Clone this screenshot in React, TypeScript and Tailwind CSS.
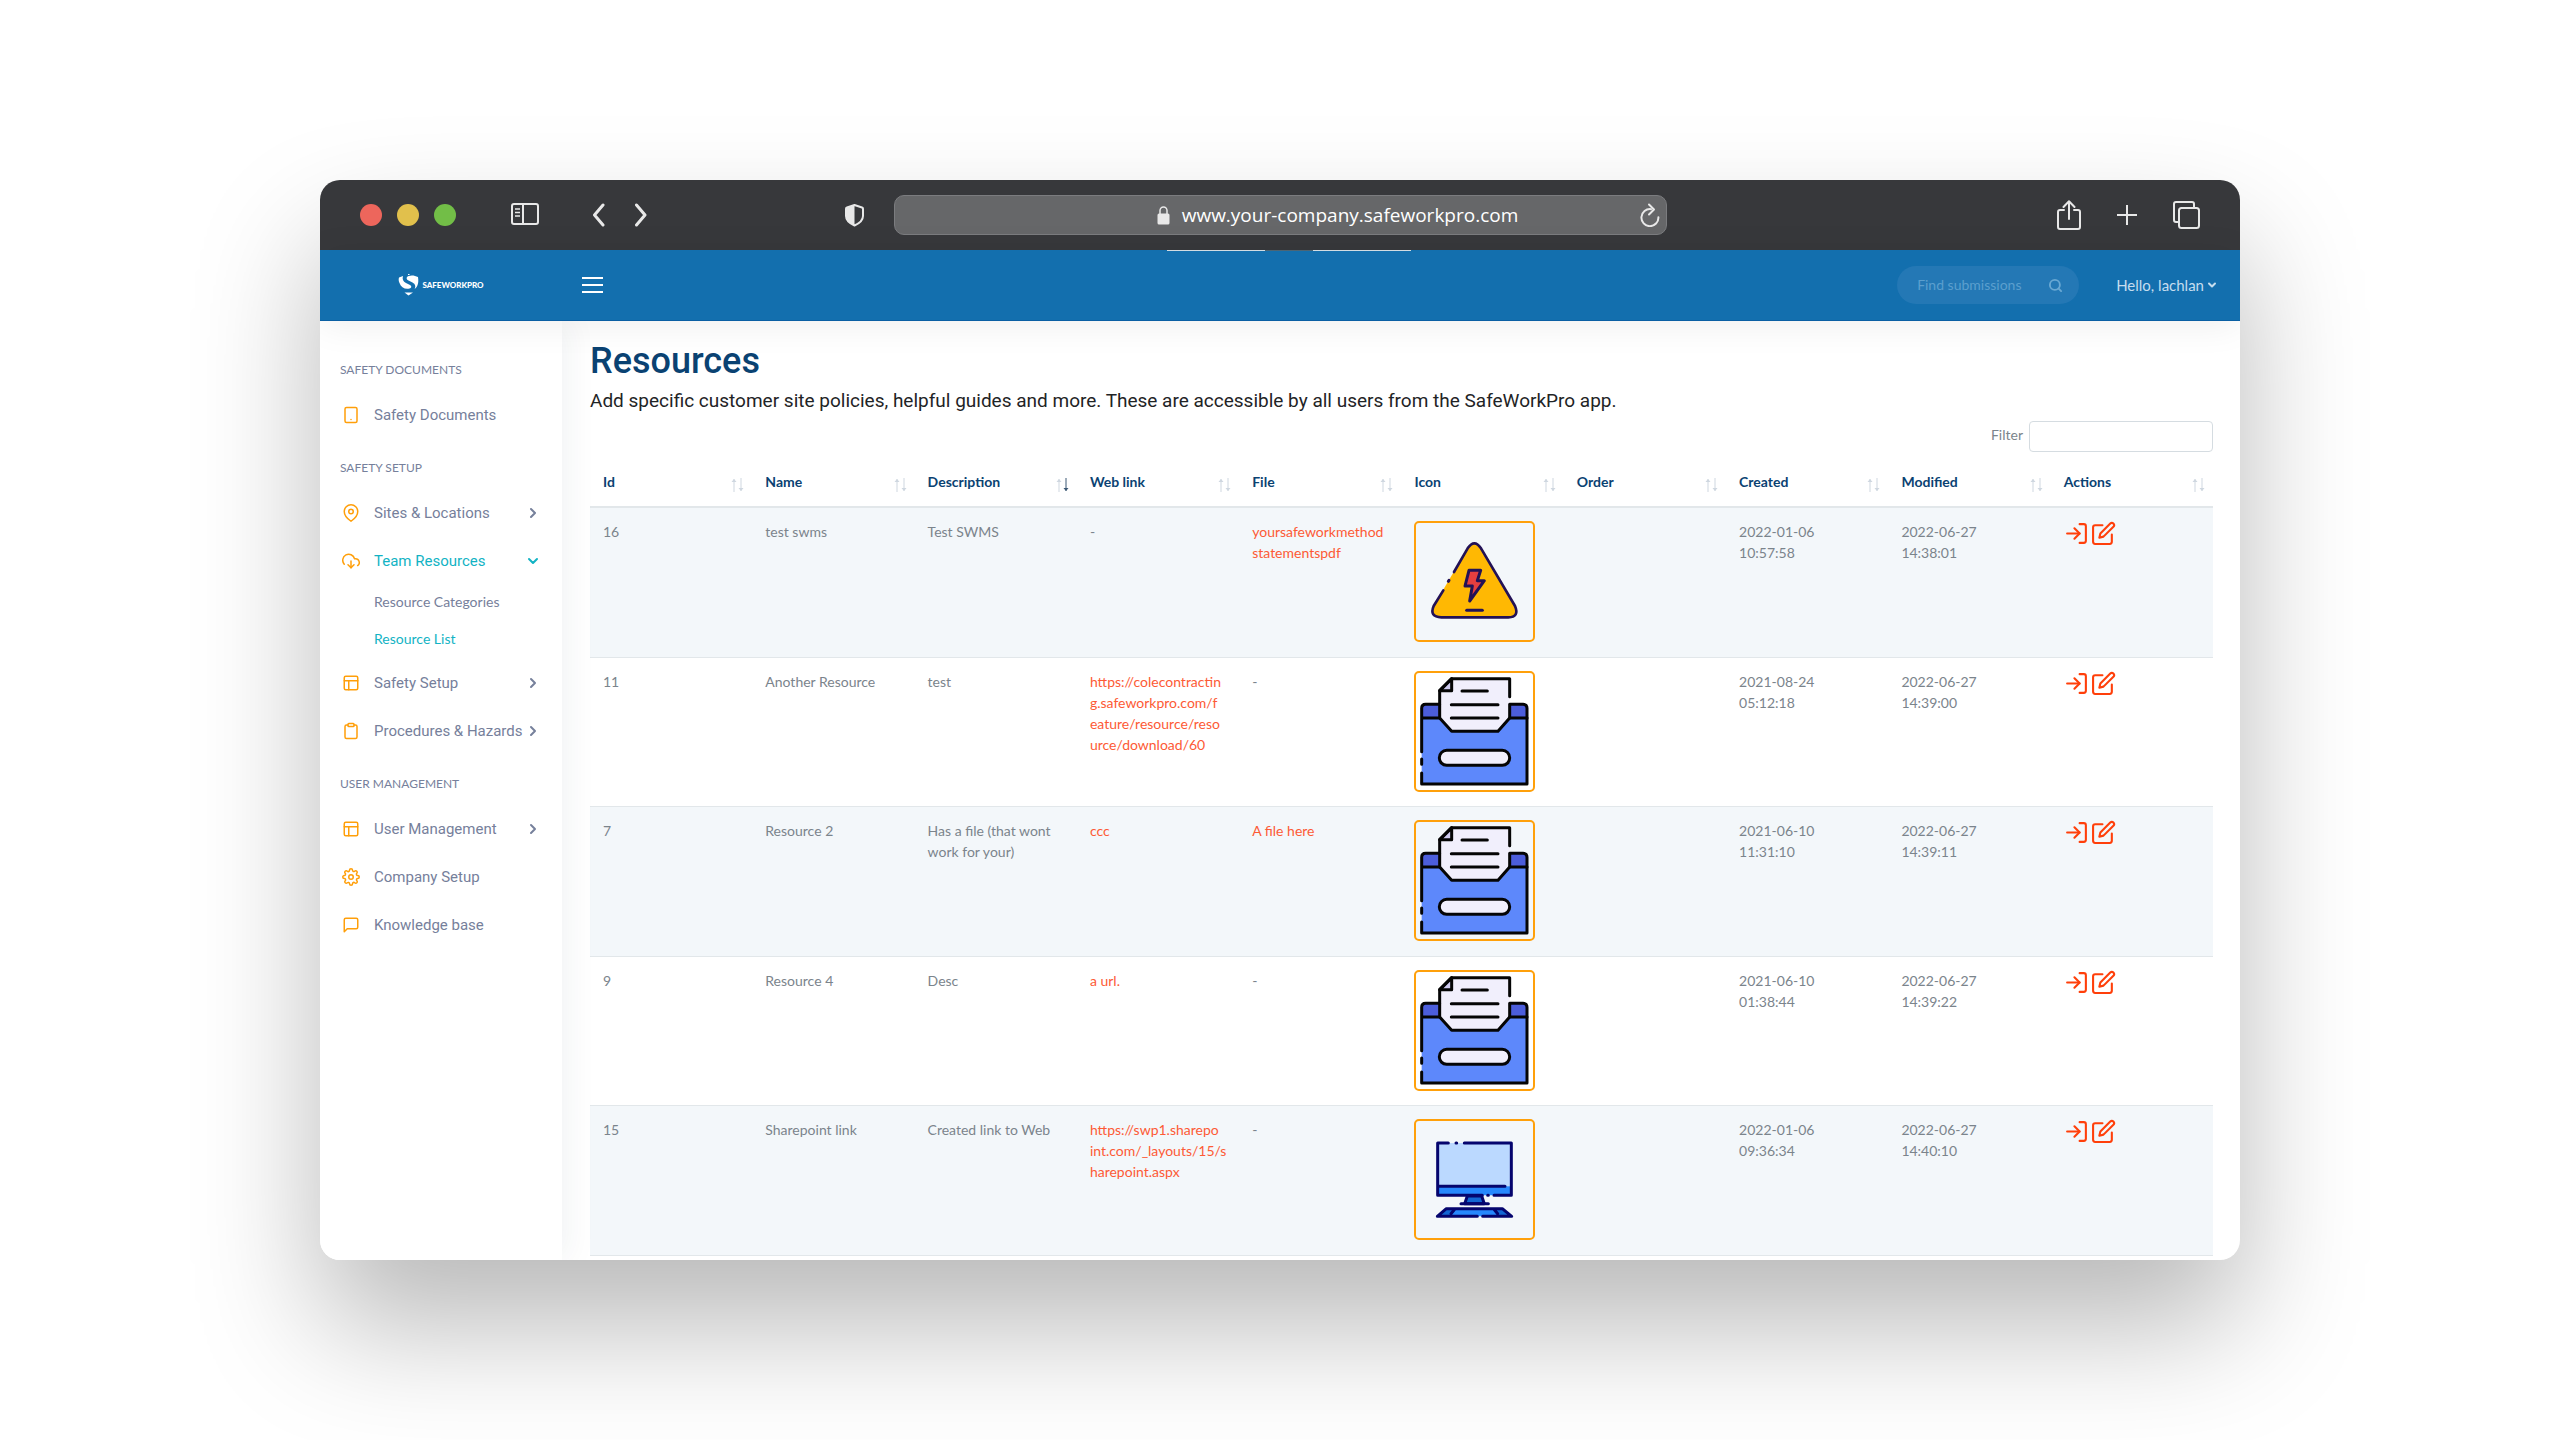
import React, { Fragment } from "react";
import type { ReactNode } from "react";
import type { IconType } from "react-icons";
import {
  FiChevronDown,
  FiChevronRight,
  FiClipboard,
  FiDownloadCloud,
  FiEdit,
  FiLayout,
  FiLogIn,
  FiMapPin,
  FiMessageSquare,
  FiSearch,
  FiSettings,
  FiTablet,
} from "react-icons/fi";

/* ---------- Browser chrome ---------- */

function BrowserBar() {
  return (
    <div className="grid h-[70px] shrink-0 grid-cols-[1fr_minmax(0,773px)_1fr] items-center bg-[#37383b] px-10 text-[#e8e8e8]">
      <div className="flex items-center pr-[30px]">
        <div className="flex gap-[15px]">
          <span className="size-[22px] rounded-full bg-[#ed665c]" />
          <span className="size-[22px] rounded-full bg-[#e1c04c]" />
          <span className="size-[22px] rounded-full bg-[#72be47]" />
        </div>
        <button aria-label="Toggle sidebar" className="ml-[55px]">
          <svg width="28" height="24" viewBox="0 0 28 24" fill="none" stroke="currentColor" strokeWidth="2">
            <rect x="1" y="1" width="26" height="20" rx="2" />
            <path d="M12 1v20" />
            <path d="M4 6h5M4 9.500h5M4 13h5" strokeWidth="1.500" />
          </svg>
        </button>
        <button aria-label="Back" className="ml-[53px]">
          <svg width="14" height="24" viewBox="0 0 14 24" fill="none" stroke="currentColor" strokeWidth="3" strokeLinecap="round" strokeLinejoin="round">
            <path d="M11 2L2.500 12l8.500 10" />
          </svg>
        </button>
        <button aria-label="Forward" className="ml-7">
          <svg width="14" height="24" viewBox="0 0 14 24" fill="none" stroke="currentColor" strokeWidth="3" strokeLinecap="round" strokeLinejoin="round">
            <path d="M2.500 2l8.500 10-8.500 10" />
          </svg>
        </button>
        <button aria-label="Privacy report" className="ml-auto">
          <svg width="19" height="24" viewBox="0 0 19 24">
            <path d="M9.500 2L17 4.500c.6.2 1 .7 1 1.300V13c0 4-4 7.500-8.500 9.500C5 20.500 1 17 1 13V5.800c0-.6.4-1.100 1-1.300z" fill="none" stroke="currentColor" strokeWidth="2" strokeLinejoin="round" />
            <path d="M9.500 2L2 4.500c-.6.2-1 .7-1 1.300V13c0 4 4 7.500 8.500 9.500z" fill="currentColor" />
          </svg>
        </button>
      </div>
      <div className="grid h-10 grid-cols-[13fr_auto_7fr] items-center rounded-[10px] border border-[#7b7c7f] bg-[#666769] pr-[6px]">
        <span />
        <div className="flex items-center gap-3">
          <svg width="13" height="19" viewBox="0 0 13 19">
            <rect x="0.500" y="7.500" width="12" height="11" rx="1.500" fill="currentColor" />
            <path d="M3 8V4.500a3.500 3.500 0 0 1 7 0V8" fill="none" stroke="currentColor" strokeWidth="1.500" />
          </svg>
          <span className="font-['Open_Sans',sans-serif] text-[19px] leading-6 text-white">www.your-company.safeworkpro.com</span>
        </div>
        <button aria-label="Reload" className="justify-self-end">
          <svg width="21" height="24" viewBox="0 0 21 24" fill="none" stroke="currentColor" strokeWidth="2" strokeLinecap="round" strokeLinejoin="round">
            <path d="M12 6.200a8.500 8.500 0 1 0 7.400 8" />
            <path d="M10 1.500l5 5-5 5" />
          </svg>
        </button>
      </div>
      <div className="flex items-center justify-end gap-9">
        <button aria-label="Share">
          <svg width="24" height="30" viewBox="0 0 24 30" fill="none" stroke="currentColor" strokeWidth="2" strokeLinecap="round" strokeLinejoin="round">
            <path d="M7 10H3a2 2 0 0 0-2 2v15a2 2 0 0 0 2 2h18a2 2 0 0 0 2-2V12a2 2 0 0 0-2-2h-4" />
            <path d="M12 19V1.500M6.500 7L12 1.300 17.500 7" />
          </svg>
        </button>
        <button aria-label="New tab">
          <svg width="20" height="20" viewBox="0 0 20 20" fill="none" stroke="currentColor" strokeWidth="2">
            <path d="M10 0v20M0 10h20" />
          </svg>
        </button>
        <button aria-label="Tab overview">
          <svg width="27" height="28" viewBox="0 0 27 28" fill="none" stroke="currentColor" strokeWidth="2">
            <rect x="6" y="7" width="20" height="20" rx="2.500" />
            <path d="M6 21H3a2 2 0 0 1-2-2V3a2 2 0 0 1 2-2h16a2 2 0 0 1 2 2v4" />
          </svg>
        </button>
      </div>
    </div>
  );
}

/* ---------- Application header ---------- */

function Logo() {
  return (
    <a href="#home" className="flex items-center gap-[3px] text-white">
      <svg width="21" height="22" viewBox="0 0 42 44" fill="currentColor">
        <path d="M2 7l8-3c-2 6 0 11 6 14l8 4c4 2 3 6-1 7-9 2-17-2-20-11C1 14 1 10 2 7z" />
        <path d="M40 6l-9-3c-4 0-9 0-12 2-3 3-2 6 2 8l8 4c6 3 7 9 4 13 6-4 9-12 7-24z" />
        <path d="M13 37h17l-9 6z" />
        <path d="M20 0h3v2h-3z" />
      </svg>
      <span className="font-['Lato',sans-serif] text-[8px] leading-3 font-black">SAFEWORKPRO</span>
    </a>
  );
}

function AppHeader() {
  return (
    <header className="relative z-20 flex h-[71px] shrink-0 items-center border-b border-[#0a5fa3] bg-[#136fae] pr-[22px] font-['Lato',sans-serif] shadow-[0_4px_36px_rgba(0,0,0,0.07)]">
      <div className="absolute inset-x-0 top-0 flex justify-center pl-[18px]">
        <span className="h-px w-[98px] bg-[#d3dce2]" />
        <span className="h-px w-12 bg-[#4b6575]" />
        <span className="h-px w-[98px] bg-[#d3dce2]" />
      </div>
      <div className="flex w-[242px] justify-center">
        <Logo />
      </div>
      <button aria-label="Menu" className="ml-5 flex flex-col gap-[5px]">
        <span className="h-[2px] w-[21px] bg-white" />
        <span className="h-[2px] w-[21px] bg-white" />
        <span className="h-[2px] w-[21px] bg-white" />
      </button>
      <label className="ml-auto flex h-[38px] w-[182px] items-center rounded-full bg-[#2478b5] pr-4 pl-5 text-[#69a8d3]">
        <input
          type="search"
          aria-label="Find submissions"
          placeholder="Find submissions"
          className="w-full min-w-0 bg-transparent text-sm outline-none placeholder:text-[#5b9fce]"
        />
        <FiSearch size={15} strokeWidth={3} className="shrink-0" />
      </label>
      <button className="ml-[37px] flex items-center gap-[2px] text-[15px] text-[#c5ddee]">
        Hello, lachlan
        <FiChevronDown size={12} strokeWidth={4} />
      </button>
    </header>
  );
}

/* ---------- Sidebar ---------- */

function NavHeading({ children }: { children: ReactNode }) {
  return (
    <h2 className="mt-2 flex h-[42px] items-center pl-5 font-['Lato',sans-serif] text-xs text-[#76809b]">{children}</h2>
  );
}

type NavItemProps = { icon: IconType; label: string; expandable?: boolean; open?: boolean };

function NavItem({ icon: Icon, label, expandable, open }: NavItemProps) {
  return (
    <a
      href="#nav"
      className={
        open
          ? "flex h-12 items-center pr-[21px] pb-px pl-[22px] text-[#12b3c4]"
          : "flex h-12 items-center pr-[21px] pb-px pl-[22px] text-[#76809b]"
      }
    >
      <Icon size={18} className="shrink-0 text-[#ff9f0a]" />
      <span className="ml-[14px] text-[15px] leading-5 whitespace-nowrap">{label}</span>
      {expandable && (
        <span className="ml-auto">
          {open ? <FiChevronDown size={16} strokeWidth={3} /> : <FiChevronRight size={16} strokeWidth={3} />}
        </span>
      )}
    </a>
  );
}

function SubItem({ label, active }: { label: string; active?: boolean }) {
  return (
    <a
      href="#sub"
      className={
        active
          ? "flex h-[37px] items-center pb-1 pl-[54px] font-['Lato',sans-serif] text-sm text-[#12b3c4]"
          : "flex h-[37px] items-center pb-1 pl-[54px] font-['Lato',sans-serif] text-sm text-[#76809b]"
      }
    >
      {label}
    </a>
  );
}

function Sidebar() {
  return (
    <nav className="relative z-10 w-[242px] shrink-0 bg-white pt-5 font-['Roboto',sans-serif] shadow-[6px_0_30px_rgba(20,50,60,0.06)]">
      <NavHeading>SAFETY DOCUMENTS</NavHeading>
      <NavItem icon={FiTablet} label="Safety Documents" />
      <NavHeading>SAFETY SETUP</NavHeading>
      <NavItem icon={FiMapPin} label="Sites & Locations" expandable />
      <NavItem icon={FiDownloadCloud} label="Team Resources" expandable open />
      <SubItem label="Resource Categories" />
      <SubItem label="Resource List" active />
      <NavItem icon={FiLayout} label="Safety Setup" expandable />
      <NavItem icon={FiClipboard} label="Procedures & Hazards" expandable />
      <NavHeading>USER MANAGEMENT</NavHeading>
      <NavItem icon={FiLayout} label="User Management" expandable />
      <NavItem icon={FiSettings} label="Company Setup" />
      <NavItem icon={FiMessageSquare} label="Knowledge base" />
    </nav>
  );
}

/* ---------- Resource pictures ---------- */

function HazardPicture() {
  return (
    <svg viewBox="6 6 351 351" fill="none" stroke="#231256" strokeWidth="8" strokeLinecap="round" strokeLinejoin="round">
      <path d="M161 82Q181 52 201 82L303 255Q317 288 283 289H82Q45 288 59 255Z" fill="#ffb803" stroke="none" />
      <path d="M120 153L161 82Q181 52 201 82L303 255Q317 288 283 289H82Q45 288 59 255L88 208" />
      <path d="M103 181l2-3" strokeWidth="9" />
      <path d="M165 148H200L190 179H211L167 240L175 195H153Z" fill="#e53f3f" strokeWidth="9" />
      <path d="M158 268H205" strokeWidth="9" />
    </svg>
  );
}

function FolderPicture() {
  return (
    <svg viewBox="6 6 351 351" fill="none" stroke="#050505" strokeWidth="9" strokeLinecap="round" strokeLinejoin="round">
      <path d="M23 141V112Q23 100 35 100H327Q339 100 339 112V141Z" fill="#4c5edb" stroke="none" />
      <path d="M23 141H339V339H23Z" fill="#5d88fb" stroke="none" />
      <path d="M77 59L113 23H287V141L252 181H113L77 141Z" fill="#f1effc" stroke="none" />
      <path d="M77 59L113 23V59Z" fill="#cfcbf0" />
      <path d="M287 77V23H113L77 59V141L113 181H252L287 141V100H327Q339 100 339 112V339H23V306" />
      <path d="M77 100H35Q23 100 23 112V242M23 264V280M23 141H77M287 141H339" />
      <path d="M144 60H220M112 101H252M112 141H252" />
      <rect x="76" y="238" width="211" height="45" rx="22" fill="#f1effc" />
    </svg>
  );
}

function ComputerPicture() {
  return (
    <svg viewBox="6 6 351 351" fill="none" stroke="#05056e" strokeWidth="9" strokeLinecap="round" strokeLinejoin="round">
      <path d="M71 72H292V202H71Z" fill="#bbd9ff" stroke="none" />
      <path d="M71 202H292V229H71Z" fill="#2688fd" stroke="none" />
      <path d="M103 72H71V229H205M151 72H292V229H240M126 72h2M221 229h2M71 202H273" />
      <path d="M160 231H203L211 254H152Z" fill="#1266d3" />
      <path d="M141 254H223" />
      <path d="M97 269H265L293 292H70Z" fill="#2688fd" stroke="none" />
      <path d="M97 269H127L108 292H70Z M237 269H265L293 292H256Z" fill="#1266d3" stroke="none" />
      <path d="M190 292H70L97 269H265L293 292H206M122 271L111 284M240 271L251 284" />
    </svg>
  );
}

/* ---------- Table ---------- */

const columns = ["Id", "Name", "Description", "Web link", "File", "Icon", "Order", "Created", "Modified", "Actions"];

type Picture = "hazard" | "folder" | "computer";

type Resource = {
  id: number;
  name: string;
  description: string[];
  web?: string[];
  file?: string[];
  picture: Picture;
  created: string[];
  modified: string[];
};

const resources: Resource[] = [
  {
    id: 16,
    name: "test swms",
    description: ["Test SWMS"],
    file: ["yoursafeworkmethod", "statementspdf"],
    picture: "hazard",
    created: ["2022-01-06", "10:57:58"],
    modified: ["2022-06-27", "14:38:01"],
  },
  {
    id: 11,
    name: "Another Resource",
    description: ["test"],
    web: ["https://colecontractin", "g.safeworkpro.com/f", "eature/resource/reso", "urce/download/60"],
    picture: "folder",
    created: ["2021-08-24", "05:12:18"],
    modified: ["2022-06-27", "14:39:00"],
  },
  {
    id: 7,
    name: "Resource 2",
    description: ["Has a file (that wont", "work for your)"],
    web: ["ccc"],
    file: ["A file here"],
    picture: "folder",
    created: ["2021-06-10", "11:31:10"],
    modified: ["2022-06-27", "14:39:11"],
  },
  {
    id: 9,
    name: "Resource 4",
    description: ["Desc"],
    web: ["a url."],
    picture: "folder",
    created: ["2021-06-10", "01:38:44"],
    modified: ["2022-06-27", "14:39:22"],
  },
  {
    id: 15,
    name: "Sharepoint link",
    description: ["Created link to Web"],
    web: ["https://swp1.sharepo", "int.com/_layouts/15/s", "harepoint.aspx"],
    picture: "computer",
    created: ["2022-01-06", "09:36:34"],
    modified: ["2022-06-27", "14:40:10"],
  },
];

function Lines({ parts }: { parts: string[] }) {
  return (
    <>
      {parts.map((part, i) => (
        <Fragment key={part}>
          {i > 0 && <br />}
          {part}
        </Fragment>
      ))}
    </>
  );
}

function LinkCell({ parts }: { parts?: string[] }) {
  if (!parts) return <>-</>;
  return (
    <a href="#resource" className="text-[#fd5a35]">
      <Lines parts={parts} />
    </a>
  );
}

function SortArrows({ descending }: { descending?: boolean }) {
  return (
    <svg width="13" height="14" viewBox="0 0 13 14" fill="none" strokeWidth="1" className="mt-[7px] shrink-0">
      <path d="M3 14V1" stroke="#cfd7e0" />
      <path d="M0.500 4L3 1l2.500 3z" fill="#cfd7e0" />
      <path d="M10 0V13" stroke={descending ? "#3c5875" : "#cfd7e0"} />
      <path d="M7.500 10L10 13l2.500-3z" fill={descending ? "#3c5875" : "#cfd7e0"} />
    </svg>
  );
}

function ResourceTable() {
  return (
    <table className="mt-[5px] w-full table-fixed border-separate border-spacing-0 text-left text-sm leading-[21px] text-[#7b848c]">
      <thead>
        <tr>
          {columns.map((column) => (
            <th key={column} scope="col" className="border-b-2 border-[#e2e7ea] py-[14px] pr-2 pl-[13px] align-top">
              <button className="flex h-[21px] w-full items-start justify-between text-sm leading-[21px] font-bold text-[#0a4272]">
                {column}
                <SortArrows descending={column === "Description"} />
              </button>
            </th>
          ))}
        </tr>
      </thead>
      <tbody className="[&_td]:border-b [&_td]:border-[#e2e7ea] [&_td]:pt-[13px] [&_td]:pb-[15px] [&_td]:pl-[13px] [&_td]:align-top [&_td]:whitespace-nowrap [&>tr:nth-child(even)_td]:pb-[14px] [&>tr:nth-child(odd)]:bg-[#f3f7fa]">
        {resources.map((r) => (
          <tr key={r.id}>
            <td>{r.id}</td>
            <td>{r.name}</td>
            <td><Lines parts={r.description} /></td>
            <td><LinkCell parts={r.web} /></td>
            <td><LinkCell parts={r.file} /></td>
            <td>
              <div className="size-[121px] overflow-hidden rounded-[5px] border-2 border-[#ffa00a]">
                {r.picture === "hazard" && <HazardPicture />}
                {r.picture === "folder" && <FolderPicture />}
                {r.picture === "computer" && <ComputerPicture />}
              </div>
            </td>
            <td />
            <td><Lines parts={r.created} /></td>
            <td><Lines parts={r.modified} /></td>
            <td>
              <div className="flex gap-[2px] text-[#ff3f0a]">
                <a href="#open" aria-label={`Open ${r.name}`}><FiLogIn size={25} /></a>
                <a href="#edit" aria-label={`Edit ${r.name}`}><FiEdit size={25} /></a>
              </div>
            </td>
          </tr>
        ))}
      </tbody>
    </table>
  );
}

export default function App() {
  return (
    <div className="flex min-h-screen items-center justify-center bg-white">
      <div className="flex h-[75vh] w-3/4 flex-col overflow-hidden rounded-[20px] bg-white shadow-[0_66px_124px_rgba(0,0,0,0.28)]">
        <BrowserBar />
        <AppHeader />
        <div className="flex min-h-0 flex-1">
          <Sidebar />
          <main className="min-w-0 flex-1 overflow-hidden pt-[19px] pr-[27px] pl-7 font-['Lato',sans-serif]">
            <h1 className="font-['Roboto',sans-serif] text-4xl leading-[42px] font-medium text-[#0a4272]">Resources</h1>
            <p className="mt-[7px] font-['Roboto',sans-serif] text-[19px] leading-6 text-[#1f2426]">
              Add specific customer site policies, helpful guides and more. These are accessible by all users from the SafeWorkPro app.
            </p>
            <div className="mt-2 flex items-center justify-end gap-[6px] text-sm text-[#7b848c]">
              <label htmlFor="filter" className="pb-1">Filter</label>
              <input id="filter" type="text" className="h-[31px] w-[184px] rounded-sm border border-[#d5dce1] bg-white px-2" />
            </div>
            <ResourceTable />
          </main>
        </div>
      </div>
    </div>
  );
}
